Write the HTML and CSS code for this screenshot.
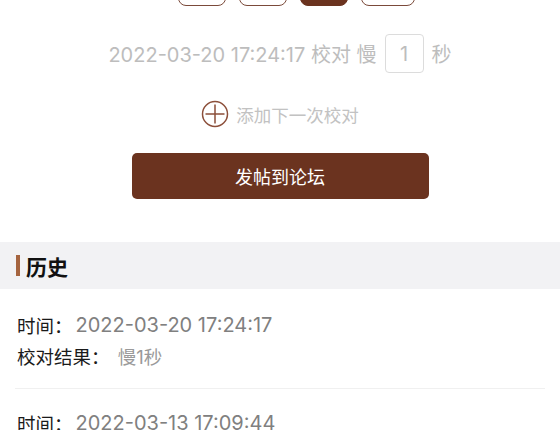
FILE: index.html
```html
<!DOCTYPE html>
<html lang="zh-CN">
<head>
<meta charset="utf-8">
<link rel="stylesheet" href="styles.css">
</head>
<body>
<div class="page">
  <div class="opts">
    <div class="opt"></div>
    <div class="opt"></div>
    <div class="opt on"></div>
    <div class="opt wide"></div>
  </div>
  <div class="calib">
    <span>2022-03-20 17:24:17 校对 慢</span>
    <span class="num">1</span>
    <span>秒</span>
  </div>
  <div class="add">
    <svg class="plus" width="28" height="28" viewBox="0 0 28 28">
      <circle cx="14" cy="14" r="12.5" fill="none" stroke="#8c4f3a" stroke-width="1.5"/>
      <path d="M14 4.5V23.5M4.5 14H23.5" stroke="#8c4f3a" stroke-width="1.5"/>
    </svg>
    <span>添加下一次校对</span>
  </div>
  <div class="post">发帖到论坛</div>
  <div class="sec"><span class="bar"></span><span class="sec-t">历史</span></div>
  <div class="item">
    <div class="row"><span class="lab">时间：</span><span class="val">2022-03-20 17:24:17</span></div>
    <div class="row"><span class="lab">校对结果：</span><span class="val res">&nbsp;慢1秒</span></div>
  </div>
  <div class="divider"></div>
  <div class="item">
    <div class="row"><span class="lab">时间：</span><span class="val">2022-03-13 17:09:44</span></div>
  </div>
</div>
</body>
</html>
```

FILE: styles.css
```css
html, body {
  margin: 0;
  padding: 0;
  background: #ffffff;
}
body {
  font-family: Inter, "Noto Sans CJK SC", sans-serif;
  width: 560px;
  height: 430px;
  overflow: hidden;
}
.page {
  display: flex;
  flex-direction: column;
}
.opts {
  display: flex;
  gap: 13px;
  height: 6px;
  padding-left: 178px;
  align-items: flex-end;
}
.opt {
  flex: none;
  width: 48px;
  height: 32px;
  margin-top: -26px;
  box-sizing: border-box;
  border: 1.5px solid #7b4a3a;
  border-radius: 8px;
  background: #fff;
}
.opt.on {
  background: #6b331f;
  border-color: #6b331f;
}
.opt.wide {
  width: 54px;
}
.calib {
  margin-top: 28px;
  height: 39px;
  display: flex;
  align-items: center;
  justify-content: center;
  gap: 8px;
  font-size: 20px;
  color: #bdbdbd;
}
.num {
  width: 39px;
  height: 39px;
  box-sizing: border-box;
  border: 1px solid #dcdcdc;
  border-radius: 4px;
  display: flex;
  align-items: center;
  justify-content: center;
  color: #bdbdbd;
}
.add {
  margin-top: 28px;
  height: 26px;
  display: flex;
  align-items: center;
  justify-content: center;
  gap: 7px;
  font-size: 17.5px;
  color: #c2c2c2;
}
.plus {
  flex: none;
}
.post {
  margin: 26px auto 0;
  width: 297px;
  height: 46px;
  border-radius: 5px;
  background: #6b331f;
  color: #fff;
  font-size: 18px;
  display: flex;
  align-items: center;
  justify-content: center;
}
.sec {
  margin-top: 43px;
  height: 47px;
  background: #f2f2f4;
  display: flex;
  align-items: center;
  padding-left: 16px;
  gap: 6px;
}
.bar {
  width: 4px;
  height: 21px;
  background: #a5643f;
}
.sec-t {
  font-size: 21px;
  font-weight: bold;
  color: #111;
}
.item {
  padding: 20px 0 17px 17px;
}
.row {
  height: 31px;
  display: flex;
  align-items: center;
  font-size: 18px;
}
.lab {
  color: #1a1a1a;
  font-size: 18.5px;
}
.val {
  color: #808080;
  font-size: 20px;
  margin-left: 3px;
}
.res {
  color: #9a9a9a;
  font-size: 18.5px;
}
.divider {
  height: 1px;
  background: #f0f0f0;
  margin: 0 15px;
}
.divider + .item {
  padding-top: 18px;
}
```
